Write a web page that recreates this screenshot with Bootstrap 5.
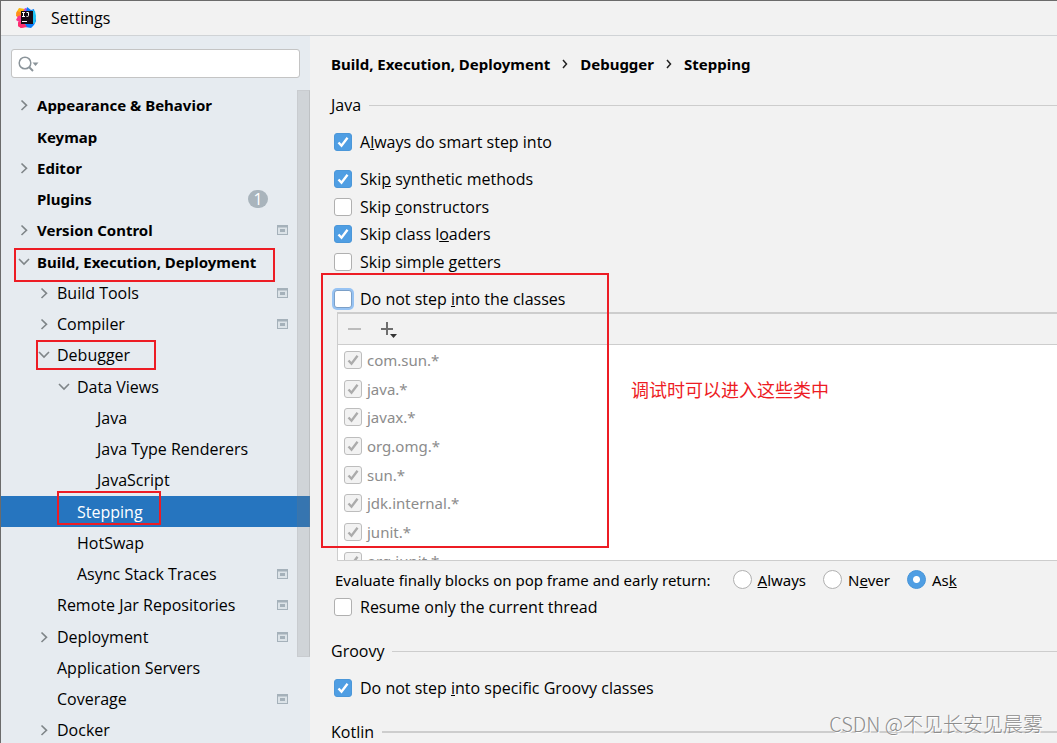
<!DOCTYPE html>
<html lang="en">
<head>
<meta charset="utf-8">
<meta name="viewport" content="width=device-width, initial-scale=1">
<title>Settings</title>
<link href="https://cdn.jsdelivr.net/npm/bootstrap@5.3.0/dist/css/bootstrap.min.css" rel="stylesheet">
<style>
  :root {
    --panel: #f2f2f2;
    --side: #e6ebf0;
    --line: #cdcdcd;
    --accent: #2675bf;
    --tick: #4f9ee3;
    --note: #ed1c24;
  }
  body {
    font-family: "Open Sans", "Noto Sans CJK SC", sans-serif;
    font-size: 16px;
    line-height: 20px;
    color: #000;
    background: var(--panel);
  }
  .fw-bold { font-family: "Noto Sans", sans-serif; font-size: 15px; }
  .window { border-left: 1px solid #6b6b6b; border-top: 1px solid #6b6b6b; }
  .titlebar { height: 35px; padding-left: 14px; gap: 13px; border-bottom: 1px solid #d0d3d6; }

  /* sidebar */
  .sidebar { width: 309px; background: var(--side); }
  .search-box { margin: 13px 10px 11px; }
  .search-box .form-control { height: 29px; padding: 0 8px 0 32px; border: 1px solid #c4c4c4; border-radius: 3px; font-size: 15px; }
  .search-box svg { left: 7px; top: 6px; }
  .tree-row { height: 31px; padding-left: 15px; padding-right: 22px; gap: 5px; color: #000; text-decoration: none; white-space: nowrap; }
  .tree li:nth-child(4n+1) .tree-row { height: 32px; }
  .tree li:nth-child(14) .tree-row { background: var(--accent); color: #fff; }
  .depth-2 { padding-left: 35px; }
  .depth-3 { padding-left: 55px; }
  .depth-4 { padding-left: 75px; }
  .twist { width: 16px; height: 16px; flex: none; fill: none; stroke: #7f8588; stroke-width: 1.6; }
  .count { width: 20px; height: 18px; margin-right: 20px; border-radius: 9px; background: #a9b4bc; color: #fff; line-height: 18px; text-align: center; }
  .thumb { right: 0; top: 54px; width: 13px; height: 567px; background: rgba(120, 120, 120, .2); border: 1px solid rgba(120, 120, 120, .08); border-right-color: rgba(120, 120, 120, .2); }

  /* red annotations laid over the window */
  .note-frame { border: 2px solid var(--note); pointer-events: none; z-index: 2; }
  .frame-build { left: 13px; top: 2px; width: 261px; height: 34px; }
  .frame-debugger { left: 35px; top: 1px; width: 120px; height: 30px; }
  .frame-stepping { left: 56px; top: -5px; width: 104px; height: 34px; }
  .frame-classes { left: -10px; top: -12px; width: 288px; height: 275px; }
  .note-text { left: 300px; top: 92px; font-size: 18px; line-height: 26px; color: var(--note); white-space: nowrap; z-index: 2; }

  /* settings page */
  .page { padding: 16px 0 0 21px; white-space: nowrap; }
  .crumbs { height: 24px; gap: 12px; }
  .section-title { gap: 8px; height: 20px; margin-top: 21px; }
  .crumbs + .section-title { margin-top: 19px; }
  .section-title::after { content: ""; flex: 1; height: 1px; background: var(--line); }
  .section-title:last-child::after { height: 2px; }
  .after-title { margin-top: 13px; }
  .after-group { margin-top: 10px; }
  .option { height: 27px; gap: 8px; padding-left: 3px; }
  .option-list .option:nth-child(odd) { height: 28px; }
  .form-check-input { flex: none; width: 18px; height: 18px; margin: 0; border: 1px solid #b0b0b0; background-color: #fff; }
  .form-check-input[type=checkbox] { border-radius: 3px; }
  .form-check-input:checked { background-color: var(--tick); border-color: #4b97d9; }
  .form-check-input:checked[type=checkbox] { background-size: 16px 16px; background-image: url("data:image/svg+xml,%3csvg xmlns='http://www.w3.org/2000/svg' viewBox='0 0 16 16'%3e%3cpath fill='none' stroke='%23fff' stroke-width='2.4' d='M3.5 8.5l3 3.2L12.5 3.8'/%3e%3c/svg%3e"); }
  .form-check-input:checked:disabled[type=checkbox] { opacity: 1; background-color: var(--panel); border-color: #bdbdbd; background-image: url("data:image/svg+xml,%3csvg xmlns='http://www.w3.org/2000/svg' viewBox='0 0 16 16'%3e%3cpath fill='none' stroke='%23ababab' stroke-width='2.4' d='M3.5 8.5l3 3.2L12.5 3.8'/%3e%3c/svg%3e"); }
  .form-check-input.has-focus { border-color: #7b9fc7; box-shadow: 0 0 0 2px #97c3f3; }
  .form-check-input[type=radio]:checked { background-image: radial-gradient(circle, #fff 3px, var(--tick) 4px); }
  .finally-row { margin-top: 5px; font-family: "Noto Sans", sans-serif; font-size: 15px; }
  .finally-row > span { margin-right: 19px; }
  .option-radio { gap: 6px; }
  .option-radio + .option-radio { margin-left: 14px; }
  .option-radio .form-check-input { width: 19px; height: 19px; }

  .class-panel { margin-left: 6px; border: 1px solid var(--line); border-top-width: 2px; border-right: 0; }
  .class-tools { height: 31px; padding-left: 6px; gap: 12px; border-bottom: 1px solid var(--line); }
  .class-tools .btn { width: 22px; height: 22px; line-height: 0; border: 0; }
  .class-tools .btn:disabled { opacity: .4; }
  .class-list { height: 215px; background: #fff; }
  .class-row { height: 29px; padding-left: 6px; gap: 5px; color: #8c8c8c; }
  .class-row label { font-family: "Noto Sans", sans-serif; font-size: 15px; }
  .class-list li:nth-child(3n) .class-row { height: 28px; }

  .stamp { right: 14px; bottom: 4px; font-family: "Noto Sans CJK SC", sans-serif; font-size: 20px; line-height: 30px; font-weight: 300; color: #8d8d8d; text-shadow: 1px 1px 0 #fff; white-space: nowrap; }
</style>
</head>
<body>
<svg class="d-none" xmlns="http://www.w3.org/2000/svg">
  <symbol id="closed" viewBox="0 0 16 16"><path d="M5.500 3.500L10.500 8.300L5.500 13"/></symbol>
  <symbol id="open" viewBox="0 0 16 16"><path d="M3 5L8 10L13 5"/></symbol>
  <symbol id="project" viewBox="0 0 11 10"><path fill="#a5b1ba" d="M0 0h11v10H0z"/><path fill="#dce3e8" d="M1 2.500h9V9H1z"/><path fill="#a5b1ba" d="M3 4h5v3H3z"/></symbol>
</svg>

<div class="window vh-100 d-flex flex-column overflow-hidden position-relative">
  <header class="titlebar d-flex align-items-center flex-shrink-0">
    <svg width="23" height="22" viewBox="0 0 23 22" aria-hidden="true">
      <path fill="#fdb60d" d="M4 1l6 1-1 6-7 2-1-4z"/>
      <path fill="#ff8a1f" d="M2 4l5 2-1 5-5-2z"/>
      <path fill="#f9358c" d="M3 9l5-1 2 12-4 1-3-2 1-4-3-2z"/>
      <path fill="#c04adf" d="M10 1l4 1-2 4-5 1z"/>
      <path fill="#087cfa" d="M12 0l4 3 3-1 2 12-2 4-3 3-6-1 1-15z"/>
      <path fill="#1fc3f5" d="M17 3l3 1 1 5-1 7-3 1z"/>
      <path fill="#fe2d6e" d="M3 15l6 1 3 4-6 1-3-2z"/>
      <path fill="#160a14" d="M6 4h12v13H6z"/>
      <path fill="none" stroke="#fff" d="M7 5.500h3M8.500 5.500v4M7 9.500h3M11.500 5.500h2v3q0 1-1 1h-1M7 14.500h5"/>
    </svg>
    <span>Settings</span>
  </header>

  <div class="d-flex flex-grow-1 overflow-hidden">
    <aside class="sidebar flex-shrink-0 position-relative">
      <div class="search-box position-relative">
        <input class="form-control" type="search" aria-label="Search settings">
        <svg class="position-absolute" width="21" height="18" viewBox="0 0 21 18" fill="none" stroke="#8b949a" stroke-width="1.500"><circle cx="7" cy="8" r="5.800"/><path stroke-width="2" d="M11 12l4 4"/><path fill="#8b949a" stroke="none" d="M14.500 7.500h6l-3 3.500z"/></svg>
      </div>
      <nav aria-label="Settings categories">
        <ul class="tree list-unstyled mb-0">
          <li><a href="#" class="tree-row d-flex align-items-center fw-bold"><svg class="twist"><use href="#closed"/></svg>Appearance &amp; Behavior</a></li>
          <li><a href="#" class="tree-row d-flex align-items-center fw-bold"><span class="twist"></span>Keymap</a></li>
          <li><a href="#" class="tree-row d-flex align-items-center fw-bold"><svg class="twist"><use href="#closed"/></svg>Editor</a></li>
          <li><a href="#" class="tree-row d-flex align-items-center"><span class="twist"></span><span class="fw-bold">Plugins</span><span class="count ms-auto">1</span></a></li>
          <li><a href="#" class="tree-row d-flex align-items-center fw-bold"><svg class="twist"><use href="#closed"/></svg>Version Control<svg class="ms-auto" width="11" height="10"><use href="#project"/></svg></a></li>
          <li class="position-relative"><a href="#" class="tree-row d-flex align-items-center fw-bold"><svg class="twist"><use href="#open"/></svg>Build, Execution, Deployment</a><span class="note-frame frame-build position-absolute"></span></li>
          <li><a href="#" class="tree-row depth-2 d-flex align-items-center"><svg class="twist"><use href="#closed"/></svg>Build Tools<svg class="ms-auto" width="11" height="10"><use href="#project"/></svg></a></li>
          <li><a href="#" class="tree-row depth-2 d-flex align-items-center"><svg class="twist"><use href="#closed"/></svg>Compiler<svg class="ms-auto" width="11" height="10"><use href="#project"/></svg></a></li>
          <li class="position-relative"><a href="#" class="tree-row depth-2 d-flex align-items-center"><svg class="twist"><use href="#open"/></svg>Debugger</a><span class="note-frame frame-debugger position-absolute"></span></li>
          <li><a href="#" class="tree-row depth-3 d-flex align-items-center"><svg class="twist"><use href="#open"/></svg>Data Views</a></li>
          <li><a href="#" class="tree-row depth-4 d-flex align-items-center"><span class="twist"></span>Java</a></li>
          <li><a href="#" class="tree-row depth-4 d-flex align-items-center"><span class="twist"></span>Java Type Renderers</a></li>
          <li><a href="#" class="tree-row depth-4 d-flex align-items-center"><span class="twist"></span>JavaScript</a></li>
          <li class="position-relative"><a href="#" class="tree-row depth-3 d-flex align-items-center" aria-current="page"><span class="twist"></span>Stepping</a><span class="note-frame frame-stepping position-absolute"></span></li>
          <li><a href="#" class="tree-row depth-3 d-flex align-items-center"><span class="twist"></span>HotSwap</a></li>
          <li><a href="#" class="tree-row depth-3 d-flex align-items-center"><span class="twist"></span>Async Stack Traces<svg class="ms-auto" width="11" height="10"><use href="#project"/></svg></a></li>
          <li><a href="#" class="tree-row depth-2 d-flex align-items-center"><span class="twist"></span>Remote Jar Repositories<svg class="ms-auto" width="11" height="10"><use href="#project"/></svg></a></li>
          <li><a href="#" class="tree-row depth-2 d-flex align-items-center"><svg class="twist"><use href="#closed"/></svg>Deployment<svg class="ms-auto" width="11" height="10"><use href="#project"/></svg></a></li>
          <li><a href="#" class="tree-row depth-2 d-flex align-items-center"><span class="twist"></span>Application Servers</a></li>
          <li><a href="#" class="tree-row depth-2 d-flex align-items-center"><span class="twist"></span>Coverage<svg class="ms-auto" width="11" height="10"><use href="#project"/></svg></a></li>
          <li><a href="#" class="tree-row depth-2 d-flex align-items-center"><svg class="twist"><use href="#closed"/></svg>Docker</a></li>
        </ul>
      </nav>
      <div class="thumb position-absolute"></div>
    </aside>

    <main class="page flex-grow-1 overflow-hidden">
      <div class="crumbs d-flex align-items-center fw-bold">
        <span>Build, Execution, Deployment</span>
        <svg width="6" height="10" viewBox="0 0 6 10" fill="none" stroke="#222" stroke-width="1.500"><path d="M1 1l3.500 4L1 9"/></svg>
        <span>Debugger</span>
        <svg width="6" height="10" viewBox="0 0 6 10" fill="none" stroke="#222" stroke-width="1.500"><path d="M1 1l3.500 4L1 9"/></svg>
        <span>Stepping</span>
      </div>

      <div class="section-title d-flex align-items-center">Java</div>
      <div class="after-title">
        <div class="option d-flex align-items-center"><input class="form-check-input" type="checkbox" id="smart" checked><label for="smart">A<u>l</u>ways do smart step into</label></div>
      </div>
      <div class="option-list after-group">
        <div class="option d-flex align-items-center"><input class="form-check-input" type="checkbox" id="synthetic" checked><label for="synthetic">Ski<u>p</u> synthetic methods</label></div>
        <div class="option d-flex align-items-center"><input class="form-check-input" type="checkbox" id="constructors"><label for="constructors">Skip <u>c</u>onstructors</label></div>
        <div class="option d-flex align-items-center"><input class="form-check-input" type="checkbox" id="loaders" checked><label for="loaders">Skip class l<u>o</u>aders</label></div>
        <div class="option d-flex align-items-center"><input class="form-check-input" type="checkbox" id="getters"><label for="getters">Skip simple <u>g</u>etters</label></div>
      </div>

      <div class="position-relative after-group">
        <div class="option d-flex align-items-center"><input class="form-check-input has-focus" type="checkbox" id="classes"><label for="classes">Do not step <u>i</u>nto the classes</label></div>
        <div class="class-panel">
          <div class="class-tools d-flex align-items-center">
            <button class="btn p-0" type="button" aria-label="Remove" disabled><svg width="22" height="22" viewBox="0 0 22 22"><path fill="#6e6e6e" d="M4 10h13v2H4z"/></svg></button>
            <button class="btn p-0" type="button" aria-label="Add"><svg width="22" height="22" viewBox="0 0 22 22"><path fill="#6e6e6e" d="M3 10h5V4h2v6h5v2h-5v5H8v-5H3z"/><path fill="#333" d="M12 16h7l-3.500 4z"/></svg></button>
          </div>
          <ul class="class-list list-unstyled mb-0 overflow-hidden">
            <li><div class="class-row d-flex align-items-center"><input class="form-check-input" type="checkbox" id="c1" checked disabled><label for="c1">com.sun.*</label></div></li>
            <li><div class="class-row d-flex align-items-center"><input class="form-check-input" type="checkbox" id="c2" checked disabled><label for="c2">java.*</label></div></li>
            <li><div class="class-row d-flex align-items-center"><input class="form-check-input" type="checkbox" id="c3" checked disabled><label for="c3">javax.*</label></div></li>
            <li><div class="class-row d-flex align-items-center"><input class="form-check-input" type="checkbox" id="c4" checked disabled><label for="c4">org.omg.*</label></div></li>
            <li><div class="class-row d-flex align-items-center"><input class="form-check-input" type="checkbox" id="c5" checked disabled><label for="c5">sun.*</label></div></li>
            <li><div class="class-row d-flex align-items-center"><input class="form-check-input" type="checkbox" id="c6" checked disabled><label for="c6">jdk.internal.*</label></div></li>
            <li><div class="class-row d-flex align-items-center"><input class="form-check-input" type="checkbox" id="c7" checked disabled><label for="c7">junit.*</label></div></li>
            <li><div class="class-row d-flex align-items-center"><input class="form-check-input" type="checkbox" id="c8" checked disabled><label for="c8">org.junit.*</label></div></li>
          </ul>
        </div>
        <span class="note-frame frame-classes position-absolute"></span>
        <span class="note-text position-absolute" lang="zh">调试时可以进入这些类中</span>
      </div>

      <div class="finally-row d-flex align-items-center ps-1" role="radiogroup" aria-labelledby="evaluate">
        <span id="evaluate">Evaluate finally blocks on pop frame and early return:</span>
        <div class="option option-radio d-flex align-items-center"><input class="form-check-input" type="radio" name="finally" id="always"><label for="always"><u>A</u>lways</label></div>
        <div class="option option-radio d-flex align-items-center"><input class="form-check-input" type="radio" name="finally" id="never"><label for="never">N<u>e</u>ver</label></div>
        <div class="option option-radio d-flex align-items-center"><input class="form-check-input" type="radio" name="finally" id="ask" checked><label for="ask">As<u>k</u></label></div>
      </div>
      <div class="option d-flex align-items-center"><input class="form-check-input" type="checkbox" id="resume"><label for="resume">Resume only the current thread</label></div>

      <div class="section-title d-flex align-items-center">Groovy</div>
      <div class="after-title">
        <div class="option d-flex align-items-center"><input class="form-check-input" type="checkbox" id="groovy" checked><label for="groovy">Do not step <u>i</u>nto specific Groovy classes</label></div>
      </div>
      <div class="section-title d-flex align-items-center">Kotlin</div>
    </main>
  </div>
  <div class="stamp position-absolute" lang="zh">CSDN @不见长安见晨雾</div>
</div>
<script src="https://cdn.jsdelivr.net/npm/bootstrap@5.3.0/dist/js/bootstrap.bundle.min.js"></script>
</body>
</html>
